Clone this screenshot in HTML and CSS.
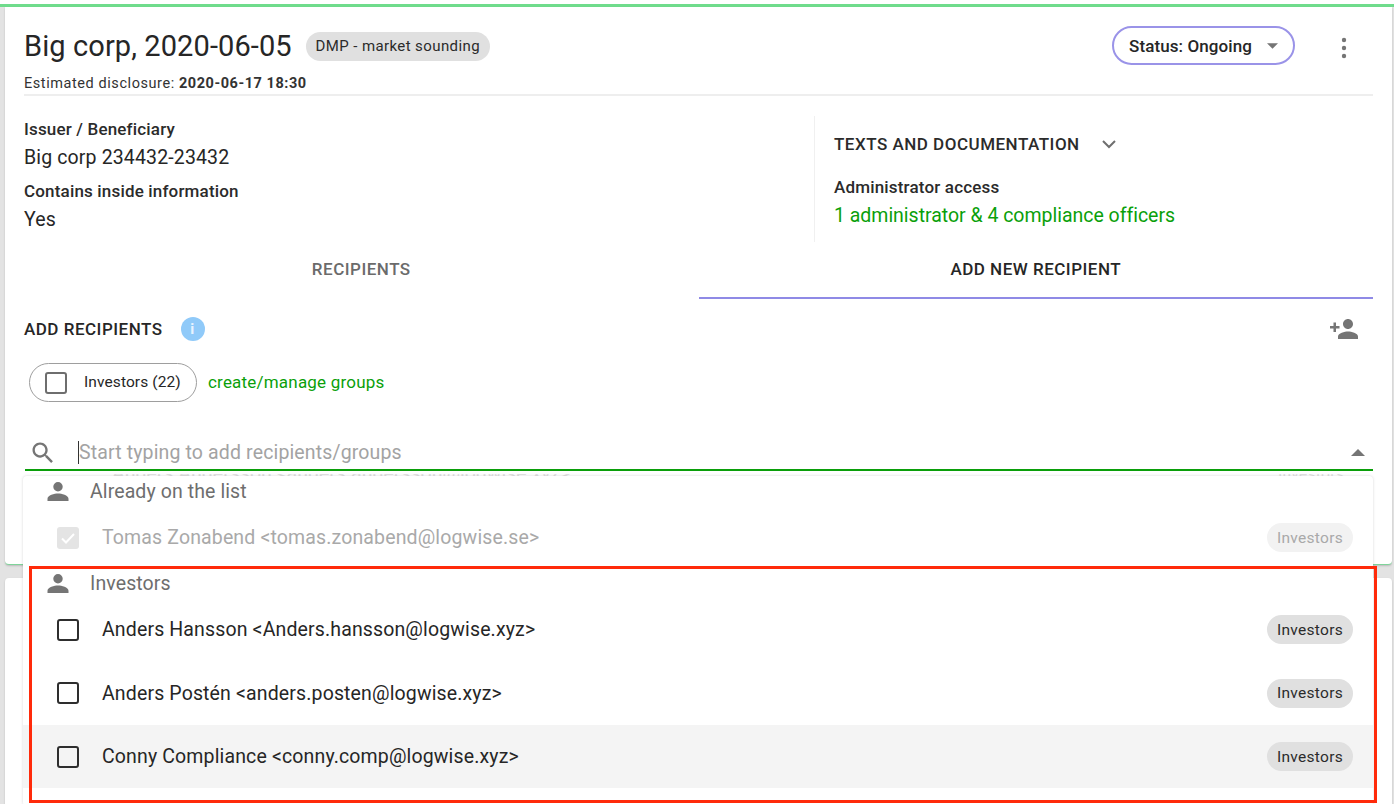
FILE: index.html
```html
<!DOCTYPE html>
<html lang="en">
<head>
<meta charset="utf-8">
<title>Big corp</title>
<link rel="stylesheet" href="styles.css">
</head>
<body>
<div class="page">
  <div class="topline"></div>
  <section class="card main">
    <header class="head">
      <div class="head-left">
        <div class="title-row">
          <h1 class="title">Big corp, 2020-06-05</h1>
          <span class="chip chip-type">DMP - market sounding</span>
        </div>
        <p class="estimate">Estimated disclosure: <b>2020-06-17 18:30</b></p>
      </div>
      <div class="head-right">
        <button class="status">Status: Ongoing<svg class="tri" viewBox="0 0 10 5"><path d="M0 0h10L5 5z"/></svg></button>
        <svg class="more" viewBox="0 0 6 22"><circle cx="3" cy="3" r="2.2"/><circle cx="3" cy="11" r="2.2"/><circle cx="3" cy="19" r="2.2"/></svg>
      </div>
    </header>
    <div class="info">
      <div class="info-left">
        <div class="label">Issuer / Beneficiary</div>
        <div class="value">Big corp 234432-23432</div>
        <div class="label label-2">Contains inside information</div>
        <div class="value">Yes</div>
      </div>
      <div class="info-right">
        <div class="docs"><span class="docs-title">TEXTS AND DOCUMENTATION</span>
          <svg class="chev" viewBox="0 0 14 9"><path d="M1 1l6 6 6-6" fill="none" stroke="#6f6f6f" stroke-width="2"/></svg>
        </div>
        <div class="label">Administrator access</div>
        <div class="value green">1 administrator &amp; 4 compliance officers</div>
      </div>
    </div>
    <nav class="tabs">
      <div class="tab">RECIPIENTS</div>
      <div class="tab active">ADD NEW RECIPIENT</div>
    </nav>
    <div class="add-head">
      <div class="add-title">ADD RECIPIENTS
        <span class="info-dot">i</span>
      </div>
      <svg class="add-person" viewBox="0 0 28 20"><path d="M18 10c2.700 0 5-2.200 5-5s-2.300-5-5-5-5 2.200-5 5 2.300 5 5 5zM18 12.500c-3.300 0-10 1.700-10 5V20h20v-2.500c0-3.300-6.700-5-10-5zM6 7V3.500H3.500V7H0v2.500h3.500V13H6V9.500h3.500V7z"/></svg>
    </div>
    <div class="groups">
      <label class="group-pill"><span class="box box-grey"></span><span class="pill-text">Investors (22)</span></label>
      <span class="link">create/manage groups</span>
    </div>
    <div class="search">
      <svg class="search-icon" viewBox="0 0 24 24"><path d="M15.500 14h-.79l-.28-.27C15.410 12.590 16 11.110 16 9.500 16 5.910 13.090 3 9.500 3S3 5.910 3 9.500 5.910 16 9.500 16c1.610 0 3.090-.59 4.230-1.570l.27.28v.79l5 4.990L20.490 19l-4.990-5zm-6 0C7.010 14 5 11.990 5 9.500S7.010 5 9.500 5 14 7.010 14 9.500 11.990 14 9.500 14z"/></svg>
      <span class="caret"></span>
      <span class="placeholder">Start typing to add recipients/groups</span>
      <svg class="tri-up" viewBox="0 0 14 7"><path d="M0 7h14L7 0z"/></svg>
      <div class="ghost"><span>Anders Andersson &lt;anders.andersson@logwise.xyz&gt;</span><span class="ghost-chip">Investors</span></div>
      <div class="dropdown">
        <div class="group-head"><svg class="person" viewBox="0 0 20 20"><path d="M10 10a4.500 4.500 0 1 0 0-9 4.500 4.500 0 0 0 0 9zM10 12c-3.300 0-10 1.600-10 5v2h20v-2c0-3.400-6.700-5-10-5z"/></svg>Already on the list</div>
        <div class="row disabled">
          <span class="box box-checked"><svg viewBox="0 0 22 22"><path d="M5 11.500l4 4 8-8.500" fill="none" stroke="#fff" stroke-width="2"/></svg></span>
          <span class="name">Tomas Zonabend &lt;tomas.zonabend@logwise.se&gt;</span>
          <span class="chip chip-row">Investors</span>
        </div>
        <div class="group-head group-tight"><svg class="person" viewBox="0 0 20 20"><path d="M10 10a4.500 4.500 0 1 0 0-9 4.500 4.500 0 0 0 0 9zM10 12c-3.300 0-10 1.600-10 5v2h20v-2c0-3.400-6.700-5-10-5z"/></svg>Investors</div>
        <div class="row">
          <span class="box"></span>
          <span class="name">Anders Hansson &lt;Anders.hansson@logwise.xyz&gt;</span>
          <span class="chip chip-row">Investors</span>
        </div>
        <div class="row">
          <span class="box"></span>
          <span class="name">Anders Postén &lt;anders.posten@logwise.xyz&gt;</span>
          <span class="chip chip-row">Investors</span>
        </div>
        <div class="row hover">
          <span class="box"></span>
          <span class="name">Conny Compliance &lt;conny.comp@logwise.xyz&gt;</span>
          <span class="chip chip-row">Investors</span>
        </div>
      </div>
    </div>
  </section>
  <section class="card second"></section>
  <div class="highlight"></div>
</div>
</body>
</html>
```
FILE: styles.css
```css
* { box-sizing: border-box; }
html, body { margin: 0; height: 100%; overflow: hidden; }
body { background: #fff; font-family: Roboto, "Liberation Sans", sans-serif; color: #212121; }
.page { position: relative; width: 1394px; height: 804px; overflow: hidden; background: #e3e3e3; padding: 0 2px 0 5px; }
.page::before { content: ""; display: block; height: 4px; margin: 0 -2px 0 -5px; background: #fff; }
.topline { height: 3px; margin: 0 -2px 0 -5px; background: #6fdc8c; }
.card { background: #fff; border-radius: 0 0 4px 4px; box-shadow: 0 1px 2px rgba(0,0,0,.18); }
.main { height: 558px; padding: 0 19px; border-bottom: 1px solid #7fd49a; }
.second { height: 240px; margin-top: 13px; border-radius: 4px 4px 0 0; }

.head { display: flex; justify-content: space-between; height: 89px; border-bottom: 2px solid #eeeeee; }
.title-row { display: flex; align-items: center; padding-top: 23px; }
.title { margin: 0; font-size: 29px; font-weight: 400; line-height: 32px; letter-spacing: .1px; color: #262626; }
.chip { display: inline-flex; align-items: center; justify-content: center; background: #e0e0e0; border-radius: 15px; color: #2b2b2b; }
.chip-type { margin-left: 14px; width: 184px; height: 29px; font-size: 15px; letter-spacing: .4px; }
.estimate { margin: 14px 0 0; font-size: 14.500px; line-height: 16px; letter-spacing: .57px; color: #333; }
.estimate b { font-weight: 700; letter-spacing: .55px; }
.head-right { display: flex; align-items: flex-start; padding-top: 19px; padding-right: 26px; }
.status { display: flex; align-items: center; width: 183px; height: 39px; padding: 0 0 0 15px; background: #fff; border: 2px solid #9a93e8; border-radius: 20px; font: 500 17px Roboto, sans-serif; letter-spacing: .1px; color: #262626; }
.tri { width: 11px; height: 6px; margin-left: 15px; fill: #757575; }
.more { width: 6px; height: 22px; margin: 11px 0 0 46px; fill: #757575; }

.info { display: flex; height: 145px; padding-top: 20px; }
.info-left { width: 790px; }
.info-right { flex: 1; height: 126px; border-left: 1px solid #f0f0f0; padding-left: 19px; }
.label { font-size: 17px; font-weight: 500; line-height: 20px; color: #2b2b2b; letter-spacing: .17px; }
.value { font-size: 19.500px; line-height: 24px; letter-spacing: .14px; color: #262626; }
.info-left .label { margin-top: 3px; }
.info-left .label-2 { margin-top: 11px; }
.info-left .value { margin-top: 7px; }
.green { color: #0a9f0a; margin-top: 7px; letter-spacing: -.02px; }
.docs { display: flex; align-items: center; height: 20px; margin: 18px 0 23px; }
.docs-title { font-size: 17px; font-weight: 500; letter-spacing: .5px; color: #2b2b2b; }
.chev { width: 14px; height: 9px; margin-left: 22px; }

.tabs { display: flex; height: 58px; }
.tab { flex: 1; display: flex; align-items: center; justify-content: center; padding-bottom: 2px; font-size: 17px; font-weight: 500; letter-spacing: .5px; color: #6b6b6b; }
.active { color: #262626; padding-bottom: 0; border-bottom: 2px solid #8f8ae6; }

.add-head { display: flex; justify-content: space-between; align-items: center; height: 60px; padding-right: 15px; }
.add-title { display: flex; align-items: center; font-size: 17px; font-weight: 500; letter-spacing: .5px; color: #262626; }
.info-dot { display: flex; align-items: center; justify-content: center; width: 24px; height: 24px; margin-left: 18px; border-radius: 50%; background: #90caf9; color: #e8f4ff; font-size: 15px; font-weight: 700; }
.add-person { width: 28px; height: 20px; fill: #757575; }

.groups { display: flex; align-items: center; height: 39px; margin-top: 4px; padding-left: 5px; }
.group-pill { display: flex; align-items: center; width: 168px; height: 39px; padding-left: 15px; border: 1px solid #9e9e9e; border-radius: 20px; font-size: 15.500px; letter-spacing: .1px; color: #262626; }
.pill-text { padding-bottom: 2px; }
.link { margin-left: 11px; padding-bottom: 2px; font-size: 17px; letter-spacing: .2px; color: #0a9f0a; }
.box { display: block; flex: none; width: 22px; height: 22px; border: 2.500px solid #2e2e2e; border-radius: 3px; }
.box-grey { border-color: #6e6e6e; margin-right: 17px; }
.box-checked { background: #e4e4e4; border: 0; }
.box-checked svg { display: block; }

.search { position: relative; display: flex; align-items: center; height: 51px; margin-top: 18px; margin-left: 1px; padding: 16px 8px 0 4px; border-bottom: 2px solid #0a9f0a; }
.search-icon { width: 28px; height: 28px; flex: none; fill: #757575; }
.caret { width: 1px; height: 23px; margin-left: 21px; background: #333; }
.placeholder { flex: 1; font-size: 19.500px; letter-spacing: .14px; color: #a3a3a3; }
.tri-up { width: 14px; height: 7px; fill: #757575; }
.ghost { position: absolute; left: 87px; right: 29px; top: 54px; height: 2px; overflow: hidden; display: flex; justify-content: space-between; font-size: 19.500px; line-height: 0; color: #e2e2e2; }
.ghost-chip { font-size: 15.500px; letter-spacing: .3px; }
.dropdown { position: absolute; left: -2px; top: 56px; width: 1350px; height: 330px; background: #fff; border-radius: 4px; box-shadow: 0 0 3px rgba(0,0,0,.16); }
.group-head { display: flex; align-items: center; height: 30px; padding-left: 24px; font-size: 19.500px; letter-spacing: .1px; color: #6e6e6e; }
.group-tight { height: 29px; }
.person { width: 22px; height: 21px; margin-right: 21px; fill: #757575; }
.row { display: flex; align-items: center; height: 63.300px; padding: 0 20px 0 34px; }
.name { flex: 1; margin-left: 23px; font-size: 19.500px; letter-spacing: .14px; color: #262626; }
.chip-row { width: 86px; height: 29px; font-size: 15.500px; letter-spacing: .3px; }
.disabled .name { color: #a9a9a9; }
.disabled .chip { background: #f2f2f2; color: #a9a9a9; }
.hover { background: #f4f4f4; }
.highlight { position: absolute; left: 29px; top: 566px; width: 1348px; height: 237px; border: 3.500px solid #ff2a0a; }
```
